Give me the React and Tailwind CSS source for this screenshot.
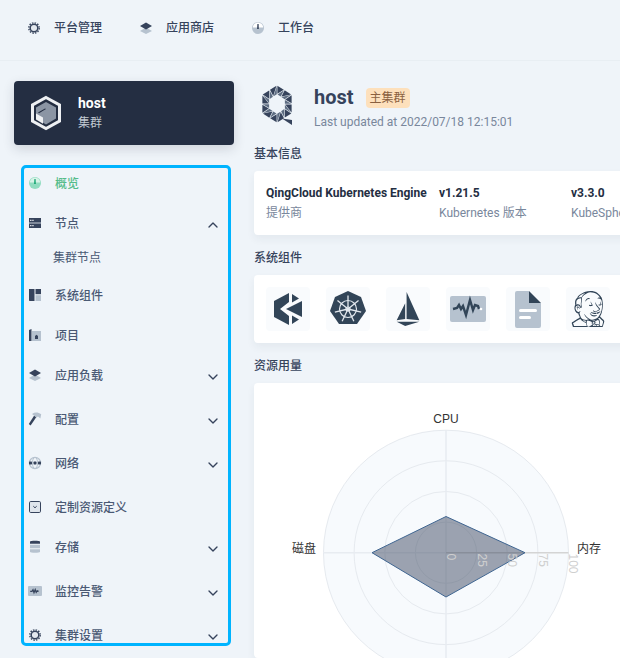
import React from 'react';
import { ChevronDown, ChevronUp } from 'lucide-react';
import { SiIstio } from 'react-icons/si';
import { FaJenkins } from 'react-icons/fa';

const DARK = '#36435c';
const LIGHT = '#b6c2cf';

// small duotone icons used by the top bar and the side menu
const GearIcon = () => (
  <svg width="16" height="16" viewBox="0 0 16 16" fill="none">
    <circle cx="8" cy="8" r="3.8" stroke={DARK} strokeWidth="1.5" fill="#e3e8ee" />
    <circle cx="8" cy="8" r="5.2" stroke={DARK} strokeWidth="1.4" strokeDasharray="1.5 1.22" fill="none" />
  </svg>
);
const LayersIcon = () => (
  <svg width="16" height="16" viewBox="0 0 16 16">
    <path d="M8 7.5 14 11 8 14 2 11z" fill={LIGHT} />
    <path d="M8 2.5 14 6 8 9.5 2 6z" fill={DARK} />
  </svg>
);
const DashIcon = ({ bg = LIGHT, fg = DARK, ring = '#fff' }) => (
  <svg width="16" height="16" viewBox="0 0 16 16">
    <circle cx="8" cy="8" r="6" fill={bg} />
    <path d="M2.8 7.6a5.2 5.2 0 0 1 10.4 0" fill={ring} />
    <path d="M7.4 4h1.2l.3 5H7.1z" fill={fg} />
  </svg>
);
const NodeIcon = () => (
  <svg width="16" height="16" viewBox="0 0 16 16">
    <rect x="2" y="3" width="12" height="4.6" fill={DARK} />
    <rect x="2" y="8.4" width="12" height="4.6" fill={DARK} />
    <rect x="3" y="4.8" width="1.5" height="1" fill="#fff" />
    <rect x="5.2" y="4.8" width="1.5" height="1" fill="#fff" />
    <rect x="3" y="10.2" width="1.5" height="1" fill="#fff" />
    <rect x="5.2" y="10.2" width="1.5" height="1" fill="#fff" />
  </svg>
);
const ComponentIcon = () => (
  <svg width="16" height="16" viewBox="0 0 16 16">
    <path d="M2 2h5.5v12H2.8a.8.8 0 0 1-.8-.8z" fill={DARK} />
    <path d="M8.5 2H14v5.2H8.5z" fill={DARK} />
    <path d="M8.5 8.2H14V14H8.5z" fill={LIGHT} />
  </svg>
);
const ProjectIcon = () => (
  <svg width="16" height="16" viewBox="0 0 16 16">
    <rect x="5" y="4" width="9" height="10" fill={LIGHT} />
    <path d="M2 3 4.5 2v12H2z" fill={DARK} />
    <path d="M8 12V9l1.5-1.2L11 9v3z" fill={DARK} />
  </svg>
);
const HammerIcon = () => (
  <svg width="16" height="16" viewBox="0 0 16 16">
    <path d="M7.2 4.4 9.4 6 3.6 14.4 1.8 13z" fill={DARK} />
    <path d="M5 3C8 1 11 1.2 14.2 3.2L13.4 7.4 11 5.4 9.2 6.4 6.6 4.2z" fill={LIGHT} />
  </svg>
);
const NetworkIcon = () => (
  <svg width="16" height="16" viewBox="0 0 16 16">
    <circle cx="8" cy="8" r="5.6" fill="none" stroke={LIGHT} strokeWidth="1.2" />
    <ellipse cx="8" cy="8" rx="2.6" ry="5.6" fill="none" stroke={LIGHT} strokeWidth="1" />
    <rect x="2" y="6.6" width="3" height="2.8" rx=".6" fill={DARK} />
    <rect x="6.5" y="6.6" width="3" height="2.8" rx=".6" fill={DARK} />
    <rect x="11" y="6.6" width="3" height="2.8" rx=".6" fill={DARK} />
  </svg>
);
const CrdIcon = () => (
  <svg width="16" height="16" viewBox="0 0 16 16">
    <rect x="2.5" y="2.5" width="11" height="11" rx="1.2" fill="#dfe5ec" stroke={DARK} />
    <path d="M6.3 7.2 8 8.8l1.7-1.6" fill="none" stroke={DARK} />
  </svg>
);
const StorageIcon = () => (
  <svg width="16" height="16" viewBox="0 0 16 16">
    <path d="M3 2.6c0-1.1 10-1.1 10 0v2.2H3z" fill={DARK} />
    <path d="M3 5.8h10v3.4H3zM3 10.2h10v2.6c0 1.4-10 1.4-10 0z" fill={LIGHT} />
  </svg>
);
const MonitorIcon = () => (
  <svg width="16" height="16" viewBox="0 0 16 16">
    <rect x="1" y="3" width="14" height="10" rx="1" fill={LIGHT} />
    <path d="M3.2 8.3h1.8l1-1.6 1 3 1.2-3.2 1 2.8 1-1.5 1.4.6" fill="none" stroke={DARK} strokeWidth="1.2" />
  </svg>
);

const SIDE_ITEMS = [
  { label: '概览', icon: <DashIcon bg="#90dcc0" fg="#1aa774" ring="#d8f3e8" />, active: true },
  { label: '节点', icon: <NodeIcon />, open: true },
  { label: '集群节点', sub: true },
  { label: '系统组件', icon: <ComponentIcon /> },
  { label: '项目', icon: <ProjectIcon /> },
  { label: '应用负载', icon: <LayersIcon />, more: true },
  { label: '配置', icon: <HammerIcon />, more: true },
  { label: '网络', icon: <NetworkIcon />, more: true },
  { label: '定制资源定义', icon: <CrdIcon /> },
  { label: '存储', icon: <StorageIcon />, more: true },
  { label: '监控告警', icon: <MonitorIcon />, more: true },
  { label: '集群设置', icon: <GearIcon />, more: true },
];

const SideRow = ({ item }) => {
  if (item.sub) {
    return <div className="h-[30px] mb-[8px] pl-[29px] pt-[2px] flex items-center text-xs text-[#4a5974]">{item.label}</div>;
  }
  const margin = item.open ? 'mb-[4px]' : item.more ? 'mb-[14px]' : 'mb-[10px]';
  return (
    <div className={`h-[30px] flex items-center pl-[3px] pr-[7px] ${margin}`}>
      <span className="w-[16px] h-[16px] shrink-0">{item.icon}</span>
      <span className={`ml-[12px] mt-[2px] flex-1 text-xs font-medium ${item.active ? 'text-[#55bc8a] mt-0' : 'text-[#4a5974]'}`}>{item.label}</span>
      {item.open && <ChevronUp size={16} strokeWidth={2} className="text-[#36435c] mt-[5px]" />}
      {item.more && <ChevronDown size={16} strokeWidth={2} className="text-[#36435c] mt-[5px]" />}
    </div>
  );
};

const ClusterIcon = () => (
  <svg width="32" height="36" viewBox="0 0 32 36">
    <path d="M16 2.5 29.5 10v16L16 33.5 2.5 26V10z" fill="none" stroke="#eef0f3" strokeWidth="3" />
    <path d="M16 7 26 12.6v11L16 29.5 6 23.6v-11z" fill="#8b95a4" />
    <path d="M6 18.5 13 22.5v6.2L6 24.6z" fill="#eef0f3" />
    <path d="M8 17.5 15 13.5 16 14l-7 4.2z" fill="#242e42" />
  </svg>
);

// ring of triangles with a tail, the big logo beside the title
const OUTER = [[15, 0], [30, 9.5], [30, 28.5], [15, 38], [0, 28.5], [0, 9.5]];
const INNER = [[15, 9.5], [22.5, 14.5], [22.5, 23.5], [15, 28.5], [7.5, 23.5], [7.5, 14.5]];
const mid = (a, b) => [(a[0] + b[0]) / 2, (a[1] + b[1]) / 2];
const shrink = (tri) => {
  const c = [0, 1].map((i) => (tri[0][i] + tri[1][i] + tri[2][i]) / 3);
  return tri.map((p) => [c[0] + (p[0] - c[0]) * 0.86, c[1] + (p[1] - c[1]) * 0.86].join(',')).join(' ');
};
const HOST_TRIANGLES = OUTER.flatMap((o, i) => {
  const o2 = OUTER[(i + 1) % 6];
  const n = INNER[i];
  const n2 = INNER[(i + 1) % 6];
  const om = mid(o, o2);
  const nm = mid(n, n2);
  return [
    [shrink([o, om, n]), '#36435c'],
    [shrink([om, nm, n]), '#5e6d82'],
    [shrink([om, o2, nm]), '#36435c'],
    [shrink([o2, n2, nm]), '#5e6d82'],
  ];
});

const HostLogo = () => (
  <svg width="31" height="40" viewBox="0 0 31 40" className="shrink-0">
    {HOST_TRIANGLES.map(([points, fill]) => <polygon key={points} points={points} fill={fill} />)}
    <polygon points="20,33.5 30,35 30,40" fill="#36435c" />
  </svg>
);

const WHEEL_ANGLES = [0, 51.4, 102.9, 154.3, 205.7, 257.1, 308.6];

const COMPONENT_ICONS = [
  <svg key="ks" width="29" height="32" viewBox="0 0 29 32">
    <path d="M15 0 0 8v16l15 8v-9l-9-7 9-7z" fill="#324558" />
    <path d="M18 1l7 4.5-7 4zM18 22.5l7 4-7 4.5zM12 16l16-8v16z" fill="#324558" />
  </svg>,
  <svg key="k8s" width="36" height="36" viewBox="0 0 36 36">
    <polygon points="18,0 31,6 36,20 27,33 9,33 0,20 5,6" fill="#324558" />
    <g stroke="#e4e9ef" fill="none">
      <circle cx="18" cy="18" r="8.5" strokeWidth="1.2" />
      <circle cx="18" cy="18" r="2" strokeWidth="1.2" />
      {WHEEL_ANGLES.map((a) => (
        <line key={a} x1="18" y1="18" x2="18" y2="4.5" strokeWidth="1.3" transform={`rotate(${a} 18 18)`} />
      ))}
    </g>
  </svg>,
  <SiIstio key="istio" size={34} color="#324558" />,
  <svg key="mon" width="38" height="28" viewBox="0 0 38 28">
    <rect width="36" height="26" x="1" y="1" rx="2" fill={LIGHT} />
    <path d="M4 14l4-1 2-3 2 4 2-3 3 9 4-15 3 10 2-5 3 1 1 3" fill="none" stroke="#324558" strokeWidth="2.4" />
    <circle cx="32" cy="14" r="1.3" fill="#fff" />
  </svg>,
  <svg key="doc" width="26" height="37" viewBox="0 0 26 37">
    <path d="M2 0h12v12h12v23a2 2 0 0 1-2 2H2a2 2 0 0 1-2-2V2a2 2 0 0 1 2-2z" fill={LIGHT} />
    <path d="M14 0 26 12H14z" fill="#324558" />
    <rect x="4" y="18" width="18" height="3" rx="1.5" fill="#fff" />
    <rect x="4" y="25" width="12" height="3" rx="1.5" fill="#fff" />
  </svg>,
  <FaJenkins key="jenkins" size={36} color="#324558" />,
];

const Stat = ({ title, label, className }) => (
  <div className={className}>
    <div className="text-xs font-bold leading-5 text-[#242e42] whitespace-nowrap">{title}</div>
    <div className="text-xs leading-5 text-[#79879c] whitespace-nowrap">{label}</div>
  </div>
);

const RadarChart = () => {
  const cx = 446;
  const cy = 552.7;
  return (
    <svg viewBox="254 383 366 275" width="366" height="275" className="block">
      <circle cx={cx} cy={cy} r="122.5" fill="#f7fafd" stroke="#e6eaef" />
      {[30.6, 61.2, 91.9].map((r) => (
        <circle key={r} cx={cx} cy={cy} r={r} fill="none" stroke="#e6eaef" />
      ))}
      <path d={`M${cx} 430V675M323.5 ${cy}H${cx}`} stroke="#e8ecf1" strokeWidth="1.5" />
      <path d={`M${cx} ${cy}H568.5`} stroke="#d4d4d4" strokeWidth="1.5" />
      <polygon points={`${cx},516.5 525,${cy} ${cx},597 372,${cy}`} fill="#36435c" fillOpacity="0.48" stroke="#3f6591" />
      {[[0, 446], [25, 477], [50, 507], [75, 538], [100, 568]].map(([value, x]) => (
        <text key={value} transform={`translate(${x} 553.5) rotate(90)`} y="-1" fontSize="12" fill="#cfcfcf" fontFamily="'Liberation Sans',sans-serif">{value}</text>
      ))}
      <g fontSize="12" fill="#333" fontFamily="'Liberation Sans','Noto Sans CJK SC',sans-serif">
        <text x={cx} y="423" textAnchor="middle">CPU</text>
        <text x="292" y="553">磁盘</text>
        <text x="577" y="553">内存</text>
      </g>
    </svg>
  );
};

export default function App() {
  return (
    <div className="w-[620px] h-[658px] overflow-hidden bg-[#eff4f9] font-[Roboto,'Noto_Sans_CJK_SC',sans-serif]">
      {/* Top bar */}
      <div className="h-[61px] border-b border-[#e8eef3] flex items-center pb-[4px] pl-[26px] text-xs font-medium text-[#36435c]">
        <div className="w-[112px] flex items-center gap-[12px]"><GearIcon /> 平台管理</div>
        <div className="w-[112px] flex items-center gap-[12px]"><LayersIcon /> 应用商店</div>
        <div className="flex items-center gap-[12px]"><DashIcon /> 工作台</div>
      </div>

      <div className="flex">
        {/* Side menu */}
        <aside className="w-[220px] ml-[14px] mt-[20px] shrink-0">
          <div className="h-[64px] rounded bg-[#242e42] shadow-[0_4px_12px_rgba(35,45,65,0.16)] flex items-center pl-[16px]">
            <ClusterIcon />
            <div className="ml-[16px]">
              <div className="text-sm font-bold leading-5 text-white">host</div>
              <div className="text-xs leading-5 text-[#c1c9d1]">集群</div>
            </div>
          </div>
          <div className="w-[210px] h-[481px] ml-[7px] mt-[19.5px] border-[3px] border-[#00b4ff] rounded-[5px] overflow-hidden">
            {SIDE_ITEMS.map((item) => <SideRow key={item.label} item={item} />)}
          </div>
        </aside>

        {/* Overview */}
        <main className="w-[420px] ml-[20px] shrink-0">
          <div className="h-[40px] mt-[24px] ml-[8px] flex">
            <HostLogo />
            <div className="ml-[21px]">
              <div className="flex items-center h-[26px]">
                <span className="text-xl font-bold text-[#36435c] leading-[24px] mb-[2px]">host</span>
                <span className="ml-[12px] h-[20px] px-[4px] rounded-sm bg-[#fde0bc] text-xs leading-5 text-[#8a6040]">主集群</span>
              </div>
              <div className="mt-[1px] text-xs leading-[20px] text-[#79879c]">Last updated at 2022/07/18 12:15:01</div>
            </div>
          </div>

          <h3 className="mt-[18px] h-5 pt-[1px] text-xs font-medium leading-5 text-[#36435c]">基本信息</h3>
          <div className="mt-[8px] h-[64px] bg-white rounded shadow-[0_4px_8px_rgba(36,46,66,0.06)] flex items-center pl-[12px]">
            <Stat className="w-[173px]" title="QingCloud Kubernetes Engine" label="提供商" />
            <Stat className="w-[132px]" title="v1.21.5" label="Kubernetes 版本" />
            <Stat title="v3.3.0" label="KubeSphere 版本" />
          </div>

          <h3 className="mt-[12px] h-5 pt-[1px] text-xs font-medium leading-5 text-[#36435c]">系统组件</h3>
          <div className="mt-[8px] h-[68px] bg-white rounded shadow-[0_4px_8px_rgba(36,46,66,0.06)] flex items-center gap-[16px] pl-[12px]">
            {COMPONENT_ICONS.map((icon) => (
              <div key={icon.key} className="w-[44px] h-[44px] rounded bg-[#f9fbfd] flex items-center justify-center">{icon}</div>
            ))}
          </div>

          <h3 className="mt-[12px] h-5 pt-[1px] text-xs font-medium leading-5 text-[#36435c]">资源用量</h3>
          <div className="mt-[8px] bg-white rounded shadow-[0_4px_8px_rgba(36,46,66,0.06)]">
            <RadarChart />
          </div>
        </main>
      </div>
    </div>
  );
}
